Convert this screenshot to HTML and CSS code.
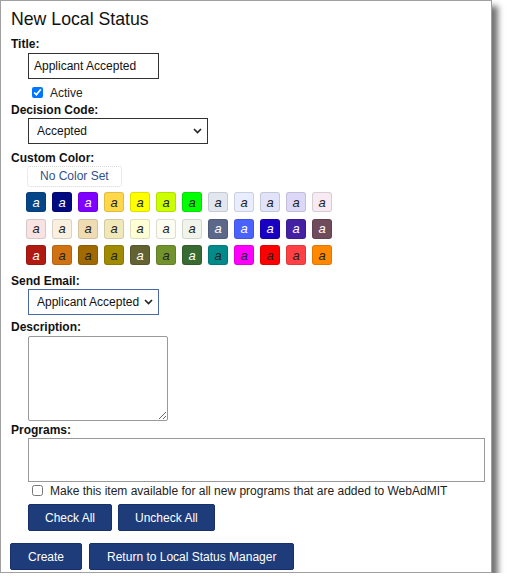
FILE: index.html
```html
<!DOCTYPE html>
<html lang="en">
<head>
    <meta charset="UTF-8">
    <meta name="viewport" content="width=device-width, initial-scale=1.0">
    <title>New Local Status</title>
    <link rel="stylesheet" href="styles.css">
</head>
<body>
    <div class="panel">
        <h1 class="panel-title">New Local Status</h1>

        <form class="status-form">
            <!-- Title -->
            <label class="field-label" for="title">Title:</label>
            <input class="text-input field" type="text" id="title" name="title" value="Applicant Accepted">

            <div class="check-row field">
                <input type="checkbox" id="active" name="active" checked>
                <label for="active">Active</label>
            </div>

            <!-- Decision Code -->
            <label class="field-label label-tight" for="decision">Decision Code:</label>
            <div class="select-wrap field decision">
                <select id="decision" name="decision">
                    <option>Accepted</option>
                </select>
                <svg class="chevron" width="9" height="6" viewBox="0 0 9 6"><path d="M1 1l3.5 3.5L8 1" fill="none" stroke="#222" stroke-width="1.6"/></svg>
            </div>

            <!-- Custom Color -->
            <label class="field-label label-color">Custom Color:</label>
            <div class="no-color field">No Color Set</div>
            <div class="swatches">
                <span class="swatch light" style="background:#054688">a</span>
                <span class="swatch light" style="background:#000a80">a</span>
                <span class="swatch light" style="background:#8000ff">a</span>
                <span class="swatch" style="background:#ffd84a">a</span>
                <span class="swatch" style="background:#ffff00">a</span>
                <span class="swatch" style="background:#ccff00">a</span>
                <span class="swatch" style="background:#00ff00">a</span>
                <span class="swatch" style="background:#e2e6ef">a</span>
                <span class="swatch" style="background:#e8edff">a</span>
                <span class="swatch" style="background:#e1e3f8">a</span>
                <span class="swatch" style="background:#ddd8f8">a</span>
                <span class="swatch" style="background:#f8eaf2">a</span>

                <span class="swatch" style="background:#f8e2e2">a</span>
                <span class="swatch" style="background:#faf0e0">a</span>
                <span class="swatch" style="background:#f0dcb2">a</span>
                <span class="swatch" style="background:#f0e8b8">a</span>
                <span class="swatch" style="background:#ffffd6">a</span>
                <span class="swatch" style="background:#fcfdf0">a</span>
                <span class="swatch" style="background:#f1f4ea">a</span>
                <span class="swatch light" style="background:#5b6889">a</span>
                <span class="swatch light" style="background:#4a62ff">a</span>
                <span class="swatch light" style="background:#1a00c2">a</span>
                <span class="swatch light" style="background:#4420a2">a</span>
                <span class="swatch light" style="background:#704b5c">a</span>

                <span class="swatch light" style="background:#b01a10">a</span>
                <span class="swatch" style="background:#d07212">a</span>
                <span class="swatch" style="background:#a06a00">a</span>
                <span class="swatch" style="background:#a08a00">a</span>
                <span class="swatch light" style="background:#626232">a</span>
                <span class="swatch" style="background:#72922c">a</span>
                <span class="swatch light" style="background:#386a32">a</span>
                <span class="swatch" style="background:#008a8a">a</span>
                <span class="swatch" style="background:#ff00ff">a</span>
                <span class="swatch" style="background:#ff0000">a</span>
                <span class="swatch" style="background:#ff4044">a</span>
                <span class="swatch" style="background:#ff8800">a</span>
            </div>

            <!-- Send Email -->
            <label class="field-label label-email" for="email">Send Email:</label>
            <div class="select-wrap field email">
                <select id="email" name="email">
                    <option>Applicant Accepted</option>
                </select>
                <svg class="chevron" width="9" height="6" viewBox="0 0 9 6"><path d="M1 1l3.5 3.5L8 1" fill="none" stroke="#222" stroke-width="1.6"/></svg>
            </div>

            <!-- Description -->
            <label class="field-label label-desc" for="description">Description:</label>
            <textarea class="field description" id="description" name="description"></textarea>

            <!-- Programs -->
            <label class="field-label label-tight">Programs:</label>
            <div class="programs field"></div>
            <div class="check-row field">
                <input type="checkbox" id="allPrograms" name="allPrograms">
                <label for="allPrograms">Make this item available for all new programs that are added to WebAdMIT</label>
            </div>

            <div class="button-row field check-buttons">
                <button type="button">Check All</button>
                <button type="button">Uncheck All</button>
            </div>

            <div class="button-row main-buttons">
                <button type="submit">Create</button>
                <button type="button">Return to Local Status Manager</button>
            </div>
        </form>
    </div>
</body>
</html>
```

FILE: styles.css
```css
body {
    font-family: 'Liberation Sans', Arial, sans-serif;
    font-size: 12px;
    color: #222;
    background-color: white;
    margin: 0;
}

.panel {
    width: 492px;
    box-sizing: border-box;
    border: 1px solid #a0a0a0;
    padding: 0 0 2px 9px;
    background-color: white;
    box-shadow: 6px 6px 6px rgba(0, 0, 0, 0.55);
}

.panel-title {
    margin: 0 0 0 1px;
    padding-top: 6px;
    font-size: 17.7px;
    line-height: 24px;
    font-weight: normal;
    color: #111;
}

.status-form {
    display: flex;
    flex-direction: column;
    align-items: flex-start;
}

.field-label {
    display: block;
    font-weight: bold;
    font-size: 12px;
    line-height: 15px;
    margin: 6px 0 0 1px;
    color: #111;
}

.label-tight { margin-top: 2px; }
.label-color { margin-top: 7px; }
.label-email { margin-top: 9px; }
.label-desc { margin-top: 5px; }

.field {
    margin-left: 18px;
}

.text-input {
    width: 131px;
    height: 26px;
    box-sizing: border-box;
    margin-top: 1px;
    padding: 0 5px;
    border: 1px solid #333;
    font-family: inherit;
    font-size: 12px;
    color: #111;
}

.check-row {
    display: flex;
    align-items: center;
    height: 17px;
    margin-top: 5px;
}

.check-row input {
    width: 11px;
    height: 11px;
    margin: 0 7px 0 4px;
}

.check-row label {
    font-size: 12px;
    color: #222;
}

.status-form .check-row + .button-row { margin-top: 5px; }

.programs + .check-row { margin-top: 0; }

.select-wrap {
    position: relative;
    height: 26px;
}

.select-wrap select {
    width: 100%;
    height: 26px;
    box-sizing: border-box;
    appearance: none;
    padding: 0 0 0 8px;
    border: 1px solid #333;
    border-radius: 0;
    background-color: white;
    font-family: inherit;
    font-size: 12px;
    color: #111;
}

.select-wrap .chevron {
    position: absolute;
    top: 10px;
    right: 6px;
    pointer-events: none;
}

.decision { width: 180px; }

.email {
    width: 131px;
}

.email select {
    border-color: #4a68a8;
}

.no-color {
    margin-top: 0;
    margin-left: 17px;
    height: 21px;
    box-sizing: border-box;
    padding: 0 12px;
    border: 1px dotted #d8d8d8;
    border-radius: 3px;
    line-height: 19px;
    color: #33508e;
}

.swatches {
    display: grid;
    grid-template-columns: repeat(12, 20px);
    grid-auto-rows: 20px;
    column-gap: 6px;
    row-gap: 6.5px;
    margin: 5px 0 0 16px;
}

.swatch {
    display: flex;
    align-items: center;
    justify-content: center;
    box-sizing: border-box;
    border: 1px solid rgba(0, 0, 0, 0.12);
    border-radius: 3px;
    font-style: italic;
    font-size: 13px;
    color: #222;
}

.swatch.light {
    color: white;
}

.description {
    width: 140px;
    height: 85px;
    box-sizing: border-box;
    margin-top: 1px;
    border: 1px solid #999;
    border-radius: 2px;
    resize: both;
}

.programs {
    width: 457px;
    height: 44px;
    box-sizing: border-box;
    border: 1px solid #999;
}

.button-row {
    display: flex;
    gap: 6px;
}

.main-buttons {
    margin-top: 12px;
    gap: 7px;
}

button {
    height: 27px;
    padding: 0 17px;
    min-width: 71px;
    background-color: #1e3c7a;
    border: 1px solid #17306a;
    border-radius: 2px;
    color: white;
    font-family: inherit;
    font-size: 12px;
    cursor: pointer;
}

.check-buttons button {
    padding: 0 16px;
}

button:hover {
    background-color: #2a4d96;
}
```
